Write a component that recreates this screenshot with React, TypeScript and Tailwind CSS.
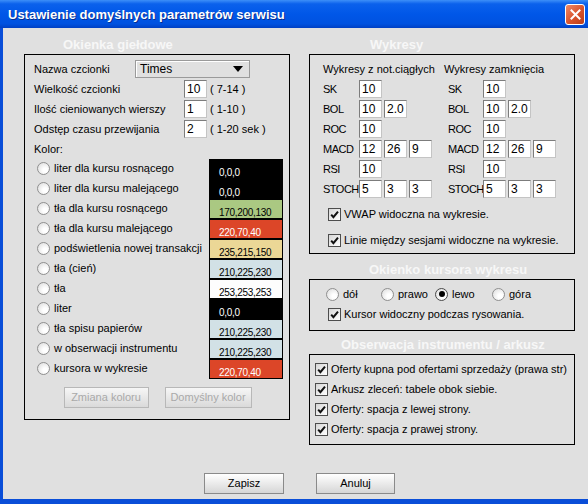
import React from 'react';

type ColorRow = { label: string; rgb: string; bg: string; dark: boolean };

const colorRows: ColorRow[] = [
    { label: 'liter dla kursu rosnącego', rgb: '0,0,0', bg: 'bg-[#000000]', dark: true },
    { label: 'liter dla kursu malejącego', rgb: '0,0,0', bg: 'bg-[#000000]', dark: true },
    { label: 'tła dla kursu rosnącego', rgb: '170,200,130', bg: 'bg-[#aac882]', dark: false },
    { label: 'tła dla kursu malejącego', rgb: '220,70,40', bg: 'bg-[#dc4628]', dark: true },
    { label: 'podświetlenia nowej transakcji', rgb: '235,215,150', bg: 'bg-[#ebd796]', dark: false },
    { label: 'tła (cień)', rgb: '210,225,230', bg: 'bg-[#d2e1e6]', dark: false },
    { label: 'tła', rgb: '253,253,253', bg: 'bg-[#fdfdfd]', dark: false },
    { label: 'liter', rgb: '0,0,0', bg: 'bg-[#000000]', dark: true },
    { label: 'tła spisu papierów', rgb: '210,225,230', bg: 'bg-[#d2e1e6]', dark: false },
    { label: 'w obserwacji instrumentu', rgb: '210,225,230', bg: 'bg-[#d2e1e6]', dark: false },
    { label: 'kursora w wykresie', rgb: '220,70,40', bg: 'bg-[#dc4628]', dark: true },
];

const indicators: { name: string; values: string[] }[] = [
    { name: 'SK', values: ['10'] },
    { name: 'BOL', values: ['10', '2.0'] },
    { name: 'ROC', values: ['10'] },
    { name: 'MACD', values: ['12', '26', '9'] },
    { name: 'RSI', values: ['10'] },
    { name: 'STOCH', values: ['5', '3', '3'] },
];

const Field: React.FC<{ value?: string; className?: string }> = ({ value, className = 'w-[23px]' }) => (
    <div
        className={`${className} h-[18px] shrink-0 bg-white border border-t-[#7c7c7c] border-l-[#7c7c7c] border-r-[#c4c4c4] border-b-[#c4c4c4] pl-[2px] text-[12px] leading-[16px] text-black`}
    >
        {value}
    </div>
);

const Radio: React.FC<{ checked?: boolean }> = ({ checked }) => (
    <span
        className={`w-[13px] h-[13px] shrink-0 rounded-full border flex items-center justify-center bg-[radial-gradient(circle_at_65%_65%,#ffffff_20%,#d9d9d9_100%)] ${
            checked ? 'border-[#4a4a4a]' : 'border-[#8f8f8f]'
        }`}
    >
        {checked && <span className="w-[6px] h-[6px] rounded-full bg-black" />}
    </span>
);

const Check: React.FC = () => (
    <span className="w-[13px] h-[13px] shrink-0 border border-[#4d4d4d] bg-[linear-gradient(135deg,#d6d6d6,#ffffff)] flex items-center justify-center">
        <svg width="9" height="9" viewBox="0 0 9 9">
            <path d="M1.2 4.6 L3.4 7.2 L8 1.6" fill="none" stroke="#111" strokeWidth="2" />
        </svg>
    </span>
);

const Legend: React.FC<{ children: React.ReactNode; className?: string }> = ({ children, className = '' }) => (
    <div className={`h-[18px] leading-[18px] text-[13px] font-bold text-[#f7f7f7] whitespace-nowrap ${className}`}>
        {children}
    </div>
);

const Button: React.FC<{ children: React.ReactNode; className?: string; disabled?: boolean }> = ({
    children,
    className = '',
    disabled,
}) => (
    <div
        className={`h-[21px] flex items-center justify-center border ${
            disabled
                ? 'border-[#b8b8b8] text-[#a9a9a9] bg-[linear-gradient(to_bottom,#f6f6f6,#dadada)]'
                : 'border-[#8a8a8a] text-black bg-[linear-gradient(to_bottom,#ffffff,#d6d6d6)]'
        } ${className}`}
    >
        {children}
    </div>
);

const NumberRow: React.FC<{ label: string; value: string; hint: string }> = ({ label, value, hint }) => (
    <div className="h-[20px] flex items-center">
        <span className="w-[150px]">{label}</span>
        <Field value={value} className="w-[23px]" />
        <span className="ml-[3px]">{hint}</span>
    </div>
);

const IndicatorColumn: React.FC<{ title: string; labelWidth: string; rowPad: string; className?: string }> = ({
    title,
    labelWidth,
    rowPad,
    className = '',
}) => (
    <div className={`flex flex-col ${className}`}>
        <div className="h-[20px] flex items-center whitespace-nowrap">{title}</div>
        {indicators.map((ind) => (
            <div key={ind.name} className={`h-[20px] flex items-center ${rowPad}`}>
                <span className={`${labelWidth} shrink-0 tracking-[-0.5px] whitespace-nowrap`}>{ind.name}</span>
                <div className="flex gap-[2px]">
                    {ind.values.map((v, i) => (
                        <Field key={i} value={v} />
                    ))}
                </div>
            </div>
        ))}
    </div>
);

const App: React.FC = () => {
    return (
        <div className="w-[588px] h-[504px] flex flex-col bg-[#0a4ed8] font-['Liberation_Sans',Arial,sans-serif] text-[11px] text-black overflow-hidden">
            {/* title bar */}
            <div className="h-[28px] shrink-0 flex items-center justify-between pl-[8px] pr-[3px] bg-[linear-gradient(to_bottom,#3d8ff8_0%,#0b61ec_14%,#0057e8_50%,#0052e0_85%,#0040c4_100%)]">
                <span className="text-[13px] font-bold text-white pt-[2px] [text-shadow:1px_1px_0_#0a2f8f]">
                    Ustawienie domyślnych parametrów serwisu
                </span>
                <div className="w-[20px] h-[21px] rounded-[3px] border border-white bg-[linear-gradient(135deg,#f08a68,#d8532c_55%,#b93d18)] flex items-center justify-center">
                    <svg width="11" height="11" viewBox="0 0 11 11">
                        <path d="M1.5 1.5 L9.5 9.5 M9.5 1.5 L1.5 9.5" stroke="white" strokeWidth="2" strokeLinecap="square" />
                    </svg>
                </div>
            </div>

            {/* body */}
            <div className="flex-1 ml-[3px] mb-[5px] bg-[#e0e0e0] flex flex-col">
                <div className="flex gap-[19px] pl-[21px] pt-[8px]">
                    {/* left column */}
                    <div className="w-[266px] flex flex-col">
                        <Legend className="pl-[39px]">Okienka giełdowe</Legend>
                        <div className="h-[366px] border border-black pt-[4px] pl-[9px] pr-[6px] flex flex-col">
                            <div className="h-[20px] flex items-center">
                                <span className="w-[101px]">Nazwa czcionki</span>
                                <div className="w-[115px] h-[18px] border border-[#9a9a9a] shadow-[inset_1px_1px_0_#ffffff] flex items-center justify-between pl-[4px] pr-[6px] text-[12px]">
                                    <span>Times</span>
                                    <svg width="10" height="6" viewBox="0 0 10 6">
                                        <path d="M0 0 H10 L5 6 Z" fill="#000" />
                                    </svg>
                                </div>
                            </div>
                            <NumberRow label="Wielkość czcionki" value="10" hint="( 7-14 )" />
                            <NumberRow label="Ilość cieniowanych wierszy" value="1" hint="( 1-10 )" />
                            <NumberRow label="Odstęp czasu przewijania" value="2" hint="( 1-20 sek )" />
                            <div className="h-[20px] flex items-center">Kolor:</div>
                            {colorRows.map((row, i) => (
                                <div key={i} className="h-[20px] flex items-start pl-[3px]">
                                    <div className="flex-1 h-[19px] flex items-center gap-[4px]">
                                        <Radio />
                                        <span>{row.label}</span>
                                    </div>
                                    <div
                                        className={`w-[74px] h-[20px] border border-black ${row.bg} ${
                                            row.dark ? 'text-white' : 'text-black'
                                        } flex items-end pl-[9px] text-[10px] leading-[11px] tracking-[-0.3px]`}
                                    >
                                        {row.rgb}
                                    </div>
                                </div>
                            ))}
                            <div className="flex justify-center gap-[16px] mt-[8px] pr-[2px]">
                                <Button disabled className="w-[85px]">
                                    Zmiana koloru
                                </Button>
                                <Button disabled className="w-[87px]">
                                    Domyślny kolor
                                </Button>
                            </div>
                        </div>
                    </div>

                    {/* right column */}
                    <div className="w-[266px] flex flex-col">
                        <Legend className="pl-[61px]">Wykresy</Legend>
                        <div className="h-[200px] border border-black pt-[4px] flex flex-col">
                            <div className="flex pl-[13px]">
                                <IndicatorColumn title="Wykresy z not.ciągłych" labelWidth="w-[36px]" rowPad="" className="w-[121px]" />
                                <IndicatorColumn title="Wykresy zamknięcia" labelWidth="w-[35px]" rowPad="pl-[4px]" />
                            </div>
                            <div className="h-[20px] mt-[5px] flex items-center gap-[3px] pl-[18px]">
                                <Check />
                                <span>VWAP widoczna na wykresie.</span>
                            </div>
                            <div className="h-[20px] mt-[6px] flex items-center gap-[3px] pl-[18px]">
                                <Check />
                                <span>Linie między sesjami widoczne na wykresie.</span>
                            </div>
                        </div>

                        <Legend className="pl-[60px] mt-[7px]">Okienko kursora wykresu</Legend>
                        <div className="h-[52px] border border-black pt-[4px] flex flex-col">
                            <div className="h-[20px] flex items-center pl-[16px]">
                                <div className="w-[55px] flex items-center gap-[4px]">
                                    <Radio />
                                    <span>dół</span>
                                </div>
                                <div className="w-[54px] flex items-center gap-[4px]">
                                    <Radio />
                                    <span>prawo</span>
                                </div>
                                <div className="w-[57px] flex items-center gap-[4px]">
                                    <Radio checked />
                                    <span>lewo</span>
                                </div>
                                <div className="flex items-center gap-[4px]">
                                    <Radio />
                                    <span>góra</span>
                                </div>
                            </div>
                            <div className="h-[20px] flex items-center gap-[3px] pl-[18px]">
                                <Check />
                                <span>Kursor widoczny podczas rysowania.</span>
                            </div>
                        </div>

                        <Legend className="pl-[32px] mt-[5px]">Obserwacja instrumentu / arkusz</Legend>
                        <div className="h-[91px] border border-black pt-[4px] pl-[5px] flex flex-col">
                            {[
                                'Oferty kupna pod ofertami sprzedaży (prawa str)',
                                'Arkusz zleceń: tabele obok siebie.',
                                'Oferty: spacja z lewej strony.',
                                'Oferty: spacja z prawej strony.',
                            ].map((t) => (
                                <div key={t} className="h-[20px] flex items-center gap-[3px] whitespace-nowrap">
                                    <Check />
                                    <span>{t}</span>
                                </div>
                            ))}
                        </div>
                    </div>
                </div>

                {/* footer */}
                <div className="mt-auto flex justify-center gap-[32px] pl-[8px] pb-[5px]">
                    <Button className="w-[80px]">Zapisz</Button>
                    <Button className="w-[79px]">Anuluj</Button>
                </div>
            </div>
        </div>
    );
};

export default App;
